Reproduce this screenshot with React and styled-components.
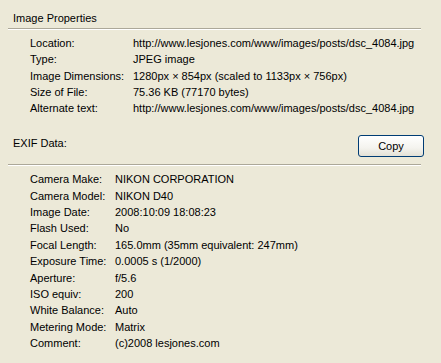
import React from "react";
import styled, { createGlobalStyle } from "styled-components";

const Global = createGlobalStyle`
  html, body { margin: 0; padding: 0; background: #ECE9D8; }
  body { font-family: Tahoma, "Liberation Sans", Arial, sans-serif; font-size: 11px; color: #000; }
`;

const Page = styled.div`
  width: 441px;
  height: 363px;
  background: #ECE9D8;
  box-sizing: border-box;
  padding: 8px 0 0 8px;
  overflow: hidden;
`;

const Section = styled.section`
  display: flex;
  flex-direction: column;
  width: 413px;
  margin-top: ${(p) => p.mt || 0}px;
`;

const Header = styled.div`
  display: flex;
  align-items: ${(p) => p.align || "center"};
  justify-content: space-between;
  height: ${(p) => p.h}px;
  padding: ${(p) => p.pt || 0}px 0 0 5px;
  box-sizing: border-box;
  border-bottom: 1px solid #ACA899;
  box-shadow: 0 1px 0 #fff;
`;

const Title = styled.span`
  line-height: 14px;
  padding-top: ${(p) => p.pt || 0}px;
`;

const Rows = styled.div`
  display: grid;
  grid-template-columns: ${(p) => p.labelW}px 1fr;
  grid-auto-rows: ${(p) => p.rowH}px;
  align-items: center;
  padding: ${(p) => p.pad};
  white-space: nowrap;
`;

const Label = styled.span``;
const Value = styled.span``;

const Button = styled.button`
  width: 66px;
  height: 22px;
  margin-right: -3px;
  font-family: inherit;
  font-size: 11px;
  color: #000;
  border: 1px solid #003C74;
  border-radius: 3px;
  background: linear-gradient(#FFFFFF, #F4F3EE 60%, #E3E1D6);
  padding: 0;
`;

const imageRows = [
  ["Location:", "http://www.lesjones.com/www/images/posts/dsc_4084.jpg"],
  ["Type:", "JPEG image"],
  ["Image Dimensions:", "1280px \u00d7 854px (scaled to 1133px \u00d7 756px)"],
  ["Size of File:", "75.36 KB (77170 bytes)"],
  ["Alternate text:", "http://www.lesjones.com/www/images/posts/dsc_4084.jpg"],
];

const exifRows = [
  ["Camera Make:", "NIKON CORPORATION"],
  ["Camera Model:", "NIKON D40"],
  ["Image Date:", "2008:10:09 18:08:23"],
  ["Flash Used:", "No"],
  ["Focal Length:", "165.0mm (35mm equivalent: 247mm)"],
  ["Exposure Time:", "0.0005 s (1/2000)"],
  ["Aperture:", "f/5.6"],
  ["ISO equiv:", "200"],
  ["White Balance:", "Auto"],
  ["Metering Mode:", "Matrix"],
  ["Comment:", "(c)2008 lesjones.com"],
];

export default function App() {
  return (
    <Page>
      <Global />
      <Section>
        <Header h={21}>
          <Title>Image Properties</Title>
        </Header>
        <Rows labelW={103} rowH={16.3} pad="6px 0 0 22px">
          {imageRows.map(([l, v]) => (
            <React.Fragment key={l}>
              <Label>{l}</Label>
              <Value>{v}</Value>
            </React.Fragment>
          ))}
        </Rows>
      </Section>
      <Section mt={15.5}>
        <Header h={33} pt={3} align="flex-start">
          <Title pt={1}>EXIF Data:</Title>
          <Button>Copy</Button>
        </Header>
        <Rows labelW={85} rowH={16.4} pad="6px 0 0 22px">
          {exifRows.map(([l, v]) => (
            <React.Fragment key={l}>
              <Label>{l}</Label>
              <Value>{v}</Value>
            </React.Fragment>
          ))}
        </Rows>
      </Section>
    </Page>
  );
}
